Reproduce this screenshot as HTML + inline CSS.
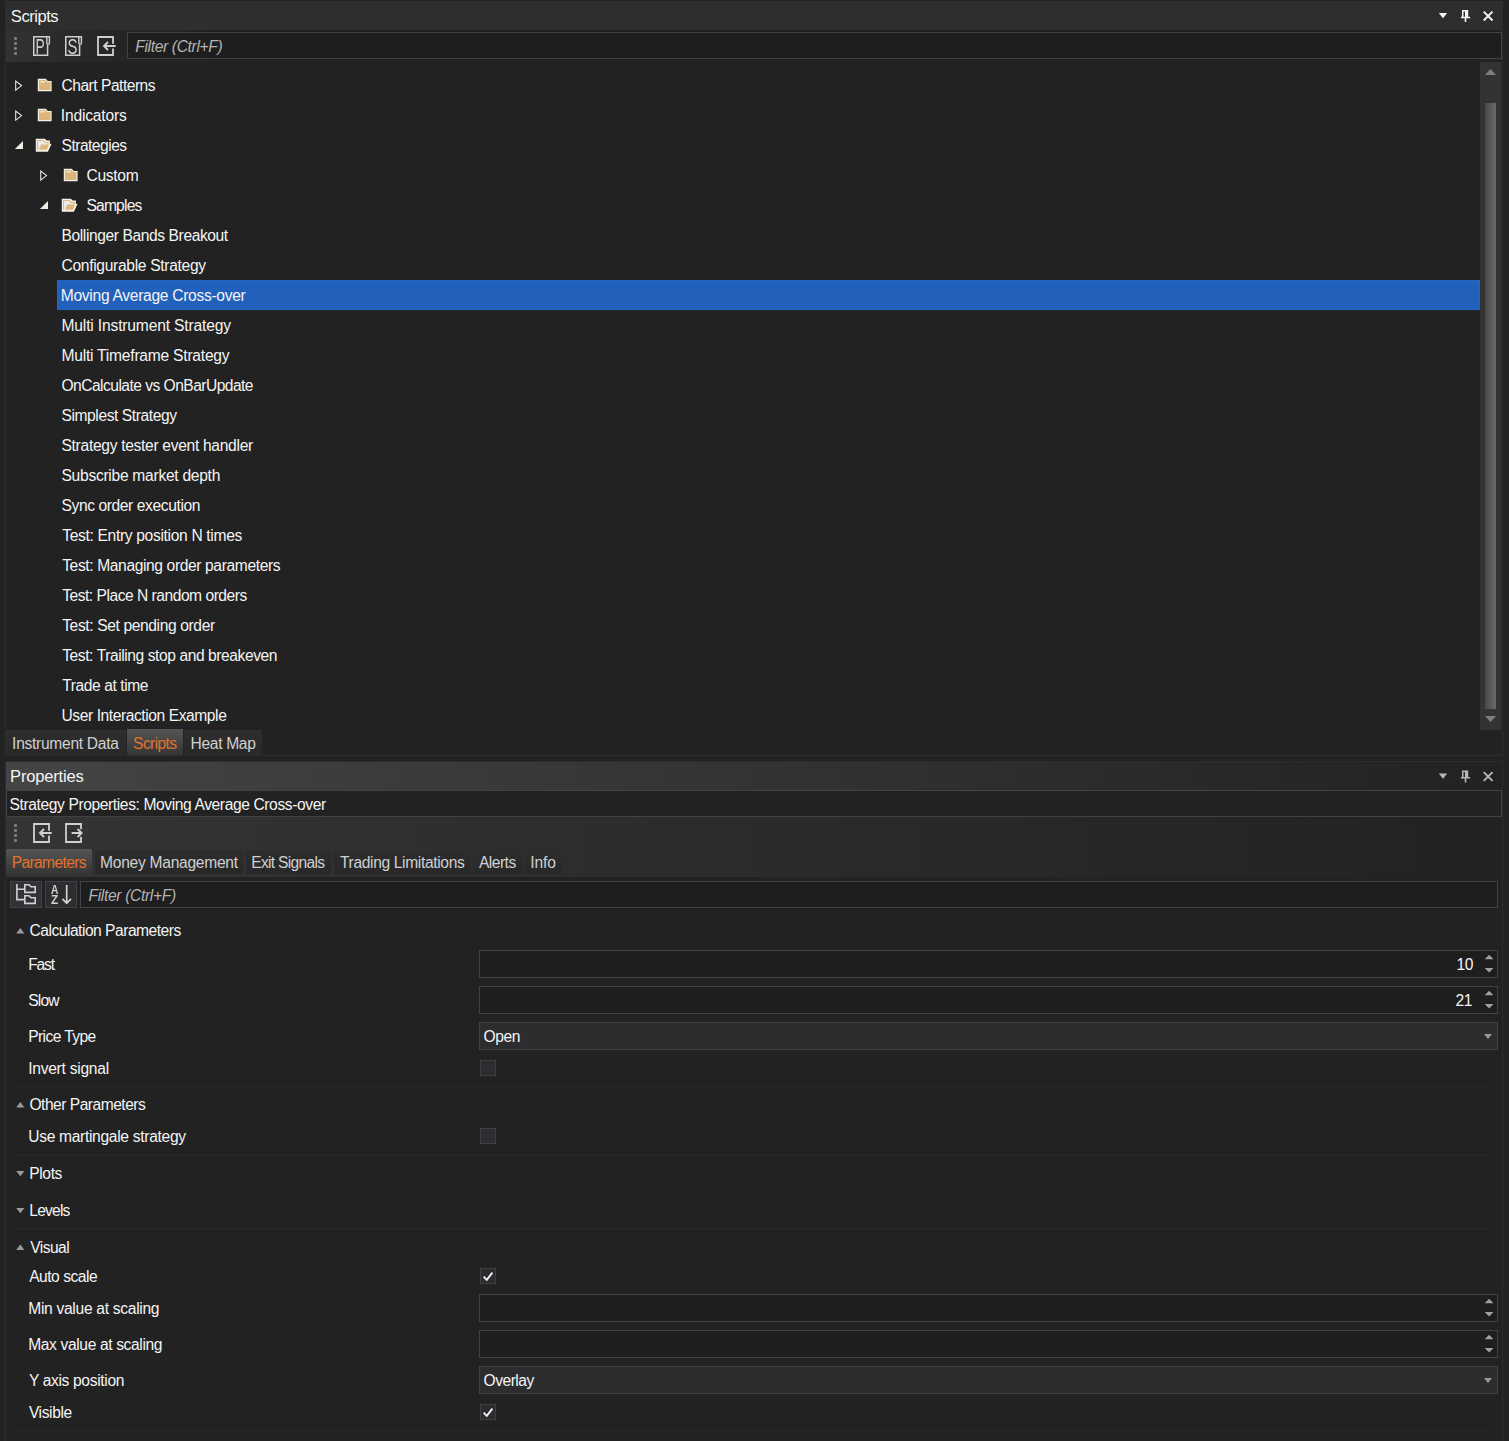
<!DOCTYPE html>
<html><head><meta charset="utf-8"><title>Scripts</title>
<style>
html,body{margin:0;padding:0;}
html{width:1509px;height:1441px;overflow:hidden;background:#222222;}
body{width:1509px;height:1441px;background:#222222;position:relative;overflow:hidden;font-family:"Liberation Sans", sans-serif;}
.t{position:absolute;white-space:pre;line-height:20px;height:20px;}
.b{position:absolute;box-sizing:border-box;}
svg{position:absolute;overflow:visible;}

.in{background:#1e1e1e;border:1px solid #414147;}
.dd{background:#2d2d30;border:1px solid #414147;}
.cb{background:#2d2d30;border:1px solid #3f3f46;}
.sep{background:#262626;height:2px;left:14px;width:1479px;}
.tab{background:linear-gradient(#2e2e2e,#282828);}
.tabsel{background:linear-gradient(#555555,#353535);}

</style></head><body>
<div class="b " style="left:5px;top:-1px;width:1498px;height:757px;background:#222222;border:1px solid #2c2c2c;"></div>
<div class="b " style="left:5px;top:761px;width:1498px;height:680px;background:#222222;border:1px solid #2c2c2c;border-bottom:none;"></div>
<div class="b " style="left:5px;top:1px;width:1498px;height:29px;background:#2e2e2e;"></div>
<div class="b " style="left:6px;top:30px;width:1496px;height:32px;background:linear-gradient(90deg,#323232 0px,#2a2a2a 60px,#242424 125px,#222 200px);"></div>
<div class="b in" style="left:127px;top:32px;width:1375px;height:27px;"></div>
<div class="b " style="left:57px;top:280px;width:1423px;height:30px;background:#2160bb;border:1px solid #2366c9;"></div>
<div class="b " style="left:1480px;top:62px;width:21px;height:668px;background:#333333;"></div>
<div class="b " style="left:1485px;top:103px;width:11px;height:606px;background:linear-gradient(90deg,#484848,#6a6a6a);"></div>
<div class="b tab" style="left:6px;top:730px;width:119.5px;height:25px;"></div>
<div class="b tabsel" style="left:127px;top:729px;width:56px;height:26px;"></div>
<div class="b tab" style="left:184px;top:730px;width:78px;height:25px;"></div>
<div class="b " style="left:6px;top:762px;width:1496px;height:28px;background:linear-gradient(90deg,#444444,#222222);"></div>
<div class="b in" style="left:6px;top:790px;width:1496px;height:27px;background:#222;"></div>
<div class="b " style="left:6px;top:817px;width:1496px;height:60px;background:linear-gradient(90deg,#343434,#222222);"></div>
<div class="b tabsel" style="left:6px;top:849px;width:86px;height:25px;border-radius:2px 2px 0 0;"></div>
<div class="b tab" style="left:94.5px;top:850px;width:148.5px;height:24px;background:linear-gradient(#2d2d2d,#282828);"></div>
<div class="b tab" style="left:246.4px;top:850px;width:84.6px;height:24px;background:linear-gradient(#2d2d2d,#282828);"></div>
<div class="b tab" style="left:334.2px;top:850px;width:135.8px;height:24px;background:linear-gradient(#2d2d2d,#282828);"></div>
<div class="b tab" style="left:473.2px;top:850px;width:48.599999999999966px;height:24px;background:linear-gradient(#2d2d2d,#282828);"></div>
<div class="b tab" style="left:525px;top:850px;width:36.200000000000045px;height:24px;background:linear-gradient(#2d2d2d,#282828);"></div>
<div class="b dd" style="left:10px;top:881px;width:32px;height:27px;background:#333337;"></div>
<div class="b dd" style="left:45px;top:881px;width:32px;height:27px;"></div>
<div class="b in" style="left:80px;top:881px;width:1418px;height:27px;"></div>
<div class="b in" style="left:479px;top:950px;width:1019px;height:28px;"></div>
<div class="b in" style="left:479px;top:986px;width:1019px;height:28px;"></div>
<div class="b in" style="left:479px;top:1294px;width:1019px;height:28px;"></div>
<div class="b in" style="left:479px;top:1330px;width:1019px;height:28px;"></div>
<div class="b dd" style="left:479px;top:1022px;width:1019px;height:28px;"></div>
<div class="b dd" style="left:479px;top:1366px;width:1019px;height:28px;"></div>
<div class="b cb" style="left:480px;top:1060px;width:16px;height:16px;"></div>
<div class="b cb" style="left:480px;top:1128px;width:16px;height:16px;"></div>
<div class="b cb" style="left:480px;top:1268px;width:16px;height:16px;"></div>
<div class="b cb" style="left:480px;top:1404px;width:16px;height:16px;"></div>
<div class="b sep" style="left:14px;top:1085px;width:1479px;height:2px;"></div>
<div class="b sep" style="left:14px;top:1154px;width:1479px;height:2px;"></div>
<div class="b sep" style="left:14px;top:1191px;width:1479px;height:2px;"></div>
<div class="b sep" style="left:14px;top:1228px;width:1479px;height:2px;"></div>
<div class="b sep" style="left:14px;top:1429px;width:1479px;height:2px;"></div>
<svg width="1509" height="1441" viewBox="0 0 1509 1441" style="left:0;top:0">
<g transform="translate(0,0)" fill="#f4f4f4" stroke="none">
<polygon points="1438.8,13 1447.2,13 1443,18.3"/>
<path d="M1462,10 H1468.2 V16.7 H1470.1 V18.2 H1466.3 V22.1 H1464.7 V18.2 H1460.9 V16.7 H1462 Z M1463.5,11.6 V16.7 H1465 V11.6 Z" fill-rule="evenodd"/>
<path d="M1483.7,11.7 L1492.5,20.5 M1492.5,11.7 L1483.7,20.5" stroke="#f4f4f4" stroke-width="1.9" fill="none"/>
</g>
<g transform="translate(0,760.4)" fill="#b8b8b8" stroke="none">
<polygon points="1438.8,13 1447.2,13 1443,18.3"/>
<path d="M1462,10 H1468.2 V16.7 H1470.1 V18.2 H1466.3 V22.1 H1464.7 V18.2 H1460.9 V16.7 H1462 Z M1463.5,11.6 V16.7 H1465 V11.6 Z" fill-rule="evenodd"/>
<path d="M1483.7,11.7 L1492.5,20.5 M1492.5,11.7 L1483.7,20.5" stroke="#b8b8b8" stroke-width="1.9" fill="none"/>
</g>
<rect x="14.2" y="37.2" width="2.6" height="2.6" fill="#8a8a8a"/>
<rect x="14.2" y="42.2" width="2.6" height="2.6" fill="#8a8a8a"/>
<rect x="14.2" y="47.2" width="2.6" height="2.6" fill="#8a8a8a"/>
<rect x="14.2" y="52.2" width="2.6" height="2.6" fill="#8a8a8a"/>
<rect x="14.2" y="824.2" width="2.6" height="2.6" fill="#8a8a8a"/>
<rect x="14.2" y="829.2" width="2.6" height="2.6" fill="#8a8a8a"/>
<rect x="14.2" y="834.2" width="2.6" height="2.6" fill="#8a8a8a"/>
<rect x="14.2" y="839.2" width="2.6" height="2.6" fill="#8a8a8a"/>
<g transform="translate(33,36)" fill="none" stroke="#d0d0d0" stroke-width="1.5">
<path d="M14.6,9 V19.25 H0.75 V0.75 H17"/>
<path d="M13.8,0.75 V7 A1.3,1.3 0 0 0 16.4,7 V0" stroke-width="1.4"/>
</g>
<g transform="translate(65,36)" fill="none" stroke="#d0d0d0" stroke-width="1.5">
<path d="M14.6,9 V19.25 H0.75 V0.75 H17"/>
<path d="M13.8,0.75 V7 A1.3,1.3 0 0 0 16.4,7 V0" stroke-width="1.4"/>
</g>
<g transform="translate(97,36)" fill="none" stroke="#d0d0d0" stroke-width="1.8">
<path d="M16,7.7 V1 H1 V19 H16 V12.4"/>
<path d="M18.7,10 H7.4 M11,6 L7,10 L11,14" stroke-width="1.9"/>
</g>
<g transform="translate(33,823)" fill="none" stroke="#d0d0d0" stroke-width="1.8">
<path d="M16,7.7 V1 H1 V19 H16 V12.4"/>
<path d="M18.7,10 H7.4 M11,6 L7,10 L11,14" stroke-width="1.9"/>
</g>
<g transform="translate(65,823)" fill="none" stroke="#d0d0d0" stroke-width="1.8">
<path d="M16,6.3 V1 H1 V19 H16 V13.7"/>
<path d="M6.6,10 H16.2 M12.6,6 L16.6,10 L12.6,14" stroke-width="1.9"/>
</g>
<polygon points="15.700000000000001,81.1 15.700000000000001,90.1 21.5,85.6" fill="#1b1b1b" stroke="#ece6dc" stroke-width="1.1"/>
<path d="M37.8,78.8 H45.8 L47.8,81.0 H51.599999999999994 V91.2 H37.8 Z" fill="#f6f2ea"/>
<path d="M38.9,79.89999999999999 H45.3 L47.3,82.1 H50.5 V90.1 H38.9 Z" fill="#dcb67a"/>
<rect x="40.199999999999996" y="81.1" width="4.8" height="1.5" fill="#efe4cf"/>
<polygon points="15.700000000000001,111.1 15.700000000000001,120.1 21.5,115.6" fill="#1b1b1b" stroke="#ece6dc" stroke-width="1.1"/>
<path d="M37.8,108.8 H45.8 L47.8,111.0 H51.599999999999994 V121.2 H37.8 Z" fill="#f6f2ea"/>
<path d="M38.9,109.89999999999999 H45.3 L47.3,112.1 H50.5 V120.1 H38.9 Z" fill="#dcb67a"/>
<rect x="40.199999999999996" y="111.1" width="4.8" height="1.5" fill="#efe4cf"/>
<polygon points="23,140.9 23,149 14.9,149" fill="#f0ece2"/>
<g transform="translate(35.8,138.8)">
<path d="M0,0 H9.1 L10.7,1.7 H14.1 V4.9 L15.7,5.1 L12.1,12.9 H0 Z" fill="#f6f2ea"/>
<path d="M1.2,1.2 H7.8 L9.4,3.2 H12.8 V6.4 H5.5 L2.5,10.9 H1.2 Z" fill="#dcb67a"/>
<path d="M2.2,2.2 H7.3 L8.9,4.2 H11.7 V5.6 H5.2 L2.6,10.9 H2.2 Z" fill="#ececf0"/>
<path d="M5.7,6.2 H13.1 L11.1,10.9 H3.3 Z" fill="#dcb67a"/>
</g>
<polygon points="40.699999999999996,171.1 40.699999999999996,180.1 46.5,175.6" fill="#1b1b1b" stroke="#ece6dc" stroke-width="1.1"/>
<path d="M63.8,168.8 H71.8 L73.8,171.0 H77.6 V181.20000000000002 H63.8 Z" fill="#f6f2ea"/>
<path d="M64.89999999999999,169.9 H71.3 L73.3,172.10000000000002 H76.5 V180.10000000000002 H64.89999999999999 Z" fill="#dcb67a"/>
<rect x="66.2" y="171.10000000000002" width="4.8" height="1.5" fill="#efe4cf"/>
<polygon points="48,200.9 48,209 39.9,209" fill="#f0ece2"/>
<g transform="translate(61.8,198.8)">
<path d="M0,0 H9.1 L10.7,1.7 H14.1 V4.9 L15.7,5.1 L12.1,12.9 H0 Z" fill="#f6f2ea"/>
<path d="M1.2,1.2 H7.8 L9.4,3.2 H12.8 V6.4 H5.5 L2.5,10.9 H1.2 Z" fill="#dcb67a"/>
<path d="M2.2,2.2 H7.3 L8.9,4.2 H11.7 V5.6 H5.2 L2.6,10.9 H2.2 Z" fill="#ececf0"/>
<path d="M5.7,6.2 H13.1 L11.1,10.9 H3.3 Z" fill="#dcb67a"/>
</g>
<polygon points="1485,75 1496,75 1490.5,69" fill="#7e7e7e"/>
<polygon points="1485,716 1496,716 1490.5,722" fill="#7e7e7e"/>
<polygon points="1484.7,959.2 1493.5,959.2 1489.1,954.8" fill="#a0a0a0"/>
<polygon points="1484.7,968 1493.5,968 1489.1,972.4" fill="#a0a0a0"/>
<polygon points="1484.7,995.2 1493.5,995.2 1489.1,990.8" fill="#a0a0a0"/>
<polygon points="1484.7,1004 1493.5,1004 1489.1,1008.4" fill="#a0a0a0"/>
<polygon points="1484.7,1303.2 1493.5,1303.2 1489.1,1298.8" fill="#a0a0a0"/>
<polygon points="1484.7,1312 1493.5,1312 1489.1,1316.4" fill="#a0a0a0"/>
<polygon points="1484.7,1339.2 1493.5,1339.2 1489.1,1334.8" fill="#a0a0a0"/>
<polygon points="1484.7,1348 1493.5,1348 1489.1,1352.4" fill="#a0a0a0"/>
<polygon points="1484,1034 1492,1034 1488,1039" fill="#999"/>
<polygon points="1484,1378 1492,1378 1488,1383" fill="#999"/>
<polygon points="16.2,933.4 24.4,933.4 20.3,928.0" fill="#9a9a9a"/>
<polygon points="16.2,1107.3999999999999 24.4,1107.3999999999999 20.3,1102.0" fill="#9a9a9a"/>
<polygon points="16.2,1170.8999999999999 24.4,1170.8999999999999 20.3,1176.3" fill="#9a9a9a"/>
<polygon points="16.2,1207.8999999999999 24.4,1207.8999999999999 20.3,1213.3" fill="#9a9a9a"/>
<polygon points="16.2,1249.8999999999999 24.4,1249.8999999999999 20.3,1244.5" fill="#9a9a9a"/>
<path d="M483.6,1276.6 L486.8,1279.8 L492.4,1272.6" fill="none" stroke="#f4f4f4" stroke-width="1.9"/>
<path d="M483.6,1412.6 L486.8,1415.8 L492.4,1408.6" fill="none" stroke="#f4f4f4" stroke-width="1.9"/>
<g fill="none" stroke="#d0d0d0" stroke-width="1.6">
<path d="M16.9,884 V899.6 H24.2 M16.9,889.2 H24.2"/>
<path d="M24.8,884.8 H29 L31,886.8 H35.2 V892.4 H24.8 Z"/>
<path d="M24.8,895.8 H29 L31,897.8 H35.2 V903.4 H24.8 Z"/>
</g>
<path d="M66.7,885 V903 M62.4,898.8 L66.7,903.2 L71,898.8" fill="none" stroke="#d0d0d0" stroke-width="1.7"/>
</svg>
<span id="t0" class="t" style="left:10.80px;top:6.50px;font-size:16.6px;color:#f4f4f4;letter-spacing:-0.488px;">Scripts</span>
<span id="t1" class="t" style="left:61.50px;top:75.50px;font-size:15.6px;color:#f4f4f4;letter-spacing:-0.496px;">Chart Patterns</span>
<span id="t2" class="t" style="left:60.80px;top:105.50px;font-size:15.6px;color:#f4f4f4;letter-spacing:-0.173px;">Indicators</span>
<span id="t3" class="t" style="left:61.50px;top:135.50px;font-size:15.6px;color:#f4f4f4;letter-spacing:-0.512px;">Strategies</span>
<span id="t4" class="t" style="left:86.50px;top:165.50px;font-size:15.6px;color:#f4f4f4;letter-spacing:-0.316px;">Custom</span>
<span id="t5" class="t" style="left:86.50px;top:195.50px;font-size:15.6px;color:#f4f4f4;letter-spacing:-0.813px;">Samples</span>
<span id="t6" class="t" style="left:61.50px;top:225.50px;font-size:15.6px;color:#f4f4f4;letter-spacing:-0.404px;">Bollinger Bands Breakout</span>
<span id="t7" class="t" style="left:61.50px;top:255.50px;font-size:15.6px;color:#f4f4f4;letter-spacing:-0.312px;">Configurable Strategy</span>
<span id="t8" class="t" style="left:60.80px;top:285.50px;font-size:15.6px;color:#f4f4f4;letter-spacing:-0.296px;">Moving Average Cross-over</span>
<span id="t9" class="t" style="left:61.50px;top:315.50px;font-size:15.6px;color:#f4f4f4;letter-spacing:-0.158px;">Multi Instrument Strategy</span>
<span id="t10" class="t" style="left:61.50px;top:345.50px;font-size:15.6px;color:#f4f4f4;letter-spacing:-0.226px;">Multi Timeframe Strategy</span>
<span id="t11" class="t" style="left:61.50px;top:375.50px;font-size:15.6px;color:#f4f4f4;letter-spacing:-0.535px;">OnCalculate vs OnBarUpdate</span>
<span id="t12" class="t" style="left:61.50px;top:405.50px;font-size:15.6px;color:#f4f4f4;letter-spacing:-0.418px;">Simplest Strategy</span>
<span id="t13" class="t" style="left:61.50px;top:435.50px;font-size:15.6px;color:#f4f4f4;letter-spacing:-0.305px;">Strategy tester event handler</span>
<span id="t14" class="t" style="left:61.50px;top:465.50px;font-size:15.6px;color:#f4f4f4;letter-spacing:-0.280px;">Subscribe market depth</span>
<span id="t15" class="t" style="left:61.50px;top:495.50px;font-size:15.6px;color:#f4f4f4;letter-spacing:-0.400px;">Sync order execution</span>
<span id="t16" class="t" style="left:62.20px;top:525.50px;font-size:15.6px;color:#f4f4f4;letter-spacing:-0.326px;">Test: Entry position N times</span>
<span id="t17" class="t" style="left:62.20px;top:555.50px;font-size:15.6px;color:#f4f4f4;letter-spacing:-0.378px;">Test: Managing order parameters</span>
<span id="t18" class="t" style="left:62.20px;top:585.50px;font-size:15.6px;color:#f4f4f4;letter-spacing:-0.483px;">Test: Place N random orders</span>
<span id="t19" class="t" style="left:62.20px;top:615.50px;font-size:15.6px;color:#f4f4f4;letter-spacing:-0.377px;">Test: Set pending order</span>
<span id="t20" class="t" style="left:62.20px;top:645.50px;font-size:15.6px;color:#f4f4f4;letter-spacing:-0.423px;">Test: Trailing stop and breakeven</span>
<span id="t21" class="t" style="left:62.20px;top:675.50px;font-size:15.6px;color:#f4f4f4;letter-spacing:-0.412px;">Trade at time</span>
<span id="t22" class="t" style="left:61.50px;top:705.50px;font-size:15.6px;color:#f4f4f4;letter-spacing:-0.424px;">User Interaction Example</span>
<span id="t23" class="t" style="left:135.30px;top:36.50px;font-size:15.6px;color:#b4b4b4;letter-spacing:-0.351px;font-style:italic;">Filter (Ctrl+F)</span>
<span id="t24" class="t" style="left:12.10px;top:733.50px;font-size:15.6px;color:#d0d0d0;letter-spacing:-0.297px;">Instrument Data</span>
<span id="t25" class="t" style="left:133.10px;top:733.50px;font-size:15.6px;color:#e0732c;letter-spacing:-0.610px;">Scripts</span>
<span id="t26" class="t" style="left:190.60px;top:733.50px;font-size:15.6px;color:#d0d0d0;letter-spacing:-0.339px;">Heat Map</span>
<span id="t27" class="t" style="left:10.10px;top:766.50px;font-size:16.6px;color:#f4f4f4;letter-spacing:-0.216px;">Properties</span>
<span id="t28" class="t" style="left:9.50px;top:794.50px;font-size:15.6px;color:#f4f4f4;letter-spacing:-0.391px;">Strategy Properties: Moving Average Cross-over</span>
<span id="t29" class="t" style="left:11.80px;top:852.50px;font-size:15.6px;color:#e0732c;letter-spacing:-0.653px;">Parameters</span>
<span id="t30" class="t" style="left:100.10px;top:852.50px;font-size:15.6px;color:#d0d0d0;letter-spacing:-0.279px;">Money Management</span>
<span id="t31" class="t" style="left:251.20px;top:852.50px;font-size:15.6px;color:#d0d0d0;letter-spacing:-0.699px;">Exit Signals</span>
<span id="t32" class="t" style="left:340.00px;top:852.50px;font-size:15.6px;color:#d0d0d0;letter-spacing:-0.353px;">Trading Limitations</span>
<span id="t33" class="t" style="left:479.00px;top:852.50px;font-size:15.6px;color:#d0d0d0;letter-spacing:-0.536px;">Alerts</span>
<span id="t34" class="t" style="left:530.20px;top:852.50px;font-size:15.6px;color:#d0d0d0;letter-spacing:-0.104px;">Info</span>
<span id="t35" class="t" style="left:88.50px;top:885.50px;font-size:15.6px;color:#b4b4b4;letter-spacing:-0.331px;font-style:italic;">Filter (Ctrl+F)</span>
<span id="t36" class="t" style="left:29.50px;top:920.50px;font-size:15.6px;color:#f4f4f4;letter-spacing:-0.490px;">Calculation Parameters</span>
<span id="t37" class="t" style="left:28.20px;top:954.50px;font-size:15.6px;color:#f4f4f4;letter-spacing:-1.182px;">Fast</span>
<span id="t38" class="t" style="left:28.20px;top:990.50px;font-size:15.6px;color:#f4f4f4;letter-spacing:-0.828px;">Slow</span>
<span id="t39" class="t" style="left:28.20px;top:1026.50px;font-size:15.6px;color:#f4f4f4;letter-spacing:-0.591px;">Price Type</span>
<span id="t40" class="t" style="left:28.20px;top:1058.50px;font-size:15.6px;color:#f4f4f4;letter-spacing:-0.263px;">Invert signal</span>
<span id="t41" class="t" style="left:29.50px;top:1094.50px;font-size:15.6px;color:#f4f4f4;letter-spacing:-0.509px;">Other Parameters</span>
<span id="t42" class="t" style="left:28.20px;top:1126.50px;font-size:15.6px;color:#f4f4f4;letter-spacing:-0.310px;">Use martingale strategy</span>
<span id="t43" class="t" style="left:29.30px;top:1163.50px;font-size:15.6px;color:#f4f4f4;letter-spacing:-0.399px;">Plots</span>
<span id="t44" class="t" style="left:29.30px;top:1200.50px;font-size:15.6px;color:#f4f4f4;letter-spacing:-0.806px;">Levels</span>
<span id="t45" class="t" style="left:30.20px;top:1237.50px;font-size:15.6px;color:#f4f4f4;letter-spacing:-0.551px;">Visual</span>
<span id="t46" class="t" style="left:29.20px;top:1266.50px;font-size:15.6px;color:#f4f4f4;letter-spacing:-0.491px;">Auto scale</span>
<span id="t47" class="t" style="left:28.20px;top:1298.50px;font-size:15.6px;color:#f4f4f4;letter-spacing:-0.296px;">Min value at scaling</span>
<span id="t48" class="t" style="left:28.20px;top:1334.50px;font-size:15.6px;color:#f4f4f4;letter-spacing:-0.365px;">Max value at scaling</span>
<span id="t49" class="t" style="left:28.90px;top:1370.50px;font-size:15.6px;color:#f4f4f4;letter-spacing:-0.341px;">Y axis position</span>
<span id="t50" class="t" style="left:28.90px;top:1402.50px;font-size:15.6px;color:#f4f4f4;letter-spacing:-0.394px;">Visible</span>
<span id="t51" class="t" style="left:1456.50px;top:954.50px;font-size:15.6px;color:#f4f4f4;letter-spacing:-0.530px;">10</span>
<span id="t52" class="t" style="left:1455.50px;top:990.50px;font-size:15.6px;color:#f4f4f4;letter-spacing:-0.530px;">21</span>
<span id="t53" class="t" style="left:483.40px;top:1026.50px;font-size:15.6px;color:#f4f4f4;letter-spacing:-0.339px;">Open</span>
<span id="t54" class="t" style="left:483.50px;top:1370.50px;font-size:15.6px;color:#f4f4f4;letter-spacing:-0.491px;">Overlay</span>
<svg width="100" height="1441" viewBox="0 0 100 1441" style="left:0;top:0;will-change:transform">
<text x="35.6" y="53.9" font-family="Liberation Sans, sans-serif" font-size="21.3" fill="#d0d0d0" textLength="9.2" lengthAdjust="spacingAndGlyphs">P</text>
<text x="67.4" y="53.9" font-family="Liberation Sans, sans-serif" font-size="21.3" fill="#d0d0d0" textLength="10" lengthAdjust="spacingAndGlyphs">S</text>
<text x="51" y="893.8" font-family="Liberation Sans, sans-serif" font-weight="bold" font-size="12" fill="#d0d0d0" textLength="7.4" lengthAdjust="spacingAndGlyphs">A</text>
<text x="51" y="903.8" font-family="Liberation Sans, sans-serif" font-weight="bold" font-size="12" fill="#d0d0d0" textLength="7.2" lengthAdjust="spacingAndGlyphs">Z</text>
</svg>
</body></html>
